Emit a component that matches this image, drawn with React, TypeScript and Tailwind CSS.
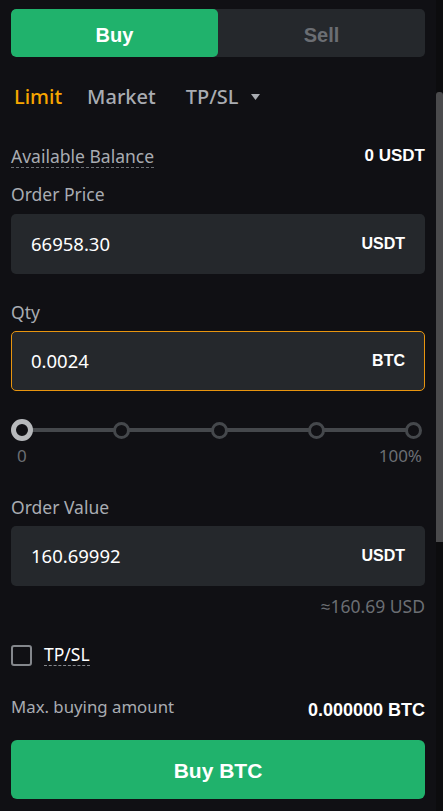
import React from "react";

const label = "text-[17.5px] text-[#a9acb2]";
const plex = { fontFamily: '"Noto Sans", "Open Sans", sans-serif' };
const arial = { fontFamily: '"Liberation Sans", Arial, sans-serif' };

function Field({ value, unit, active }: { value: string; unit: string; active?: boolean }) {
  return (
    <div
      className={`h-[60px] rounded-[5px] bg-[#25282c] flex items-center justify-between pl-[19px] pr-[19px] border ${
        active ? "border-[#e8950f]" : "border-transparent"
      }`}
    >
      <span className="text-[18.5px] text-white" style={plex}>{value}</span>
      <span className="text-[16px] font-bold text-white" style={arial}>{unit}</span>
    </div>
  );
}

export default function App() {
  return (
    <div className="w-[443px] h-[811px] bg-[#101014] flex overflow-hidden" style={plex}>
      <div className="w-[436px] flex flex-col px-[11px] pt-[9px]">
        <div className="flex h-[48px] rounded-[5px] bg-[#25282c] overflow-hidden">
          <div className="w-[207px] bg-[#20b26c] rounded-[5px] flex items-center justify-center pt-[3px] text-white text-[20px] font-bold" style={arial}>Buy</div>
          <div className="flex-1 flex items-center justify-center pt-[3px] text-[#6b6e73] text-[20px] font-bold" style={arial}>Sell</div>
        </div>

        <div className="flex items-center mt-[26px] h-[28px] pl-[3px] text-[20px] font-medium">
          <span className="text-[#f7a600]">Limit</span>
          <span className="text-[#a9acb2] ml-[25px]">Market</span>
          <span className="text-[#a9acb2] ml-[30px]">TP/SL</span>
          <svg width="9" height="6" viewBox="0 0 9 6" className="ml-[12px]"><path d="M0 0h9L4.5 6z" fill="#a9acb2" /></svg>
        </div>

        <div className="flex items-center justify-between mt-[33px] h-[24px]">
          <span className={`${label} border-b border-dashed border-[#6b6e73] leading-[22px]`}>Available Balance</span>
          <span className="text-[17px] font-bold text-white" style={arial}>0 USDT</span>
        </div>

        <div className={`${label} mt-[14px] h-[24px] leading-[24px]`}>Order Price</div>
        <div className="mt-[8px]"><Field value="66958.30" unit="USDT" /></div>

        <div className={`${label} mt-[26px] h-[24px] leading-[24px]`}>Qty</div>
        <div className="mt-[7px]"><Field value="0.0024" unit="BTC" active /></div>

        <div className="mt-[28px] relative h-[22px] mr-[3px]">
          <div className="absolute left-[10px] right-[8px] top-[9px] h-[4px] bg-[#45484c]" />
          <div className="relative flex justify-between items-center h-[22px]">
            <div className="w-[22px] h-[22px] rounded-full border-[5px] border-[#b7b9bc] bg-[#101014]" />
            {[0, 1, 2, 3].map((i) => (
              <div key={i} className="w-[17px] h-[17px] rounded-full border-[3px] border-[#45484c] bg-[#101014]" />
            ))}
          </div>
        </div>
        <div className="flex justify-between text-[17px] text-[#6b6e73] mt-[5px] h-[20px] leading-[20px]">
          <span className="pl-[6px]">0</span>
          <span className="pr-[3px]">100%</span>
        </div>

        <div className={`${label} mt-[29px] h-[24px] leading-[24px]`}>Order Value</div>
        <div className="mt-[7px]"><Field value="160.69992" unit="USDT" /></div>
        <div className="text-right text-[17.5px] text-[#6b6e73] mt-[9px] h-[22px] leading-[22px]">≈160.69 USD</div>

        <div className="flex items-center mt-[27px] h-[22px]">
          <div className="w-[21px] h-[21px] rounded-[3px] border-2 border-[#84878c]" />
          <span className="ml-[12px] text-[17.5px] text-white border-b border-dashed border-[#84878c] leading-[21px]">TP/SL</span>
        </div>

        <div className="flex justify-between mt-[30px] h-[24px]">
          <span className="text-[16.8px] text-[#a9acb2] leading-[22px]">Max. buying amount</span>
          <span className="text-[18px] font-bold text-white leading-[22px] mt-[3px]" style={arial}>0.000000 BTC</span>
        </div>

        <button className="mt-[20px] h-[59px] rounded-[6px] bg-[#20b26c] text-white text-[21px] font-bold pt-[2px]" style={arial}>Buy BTC</button>
      </div>
      <div className="w-[7px] bg-[#0c0c0e] relative">
        <div className="absolute left-0 right-0 top-[92px] h-[450px] bg-[#4a4a4c] rounded-t-[3px]" />
      </div>
    </div>
  );
}
